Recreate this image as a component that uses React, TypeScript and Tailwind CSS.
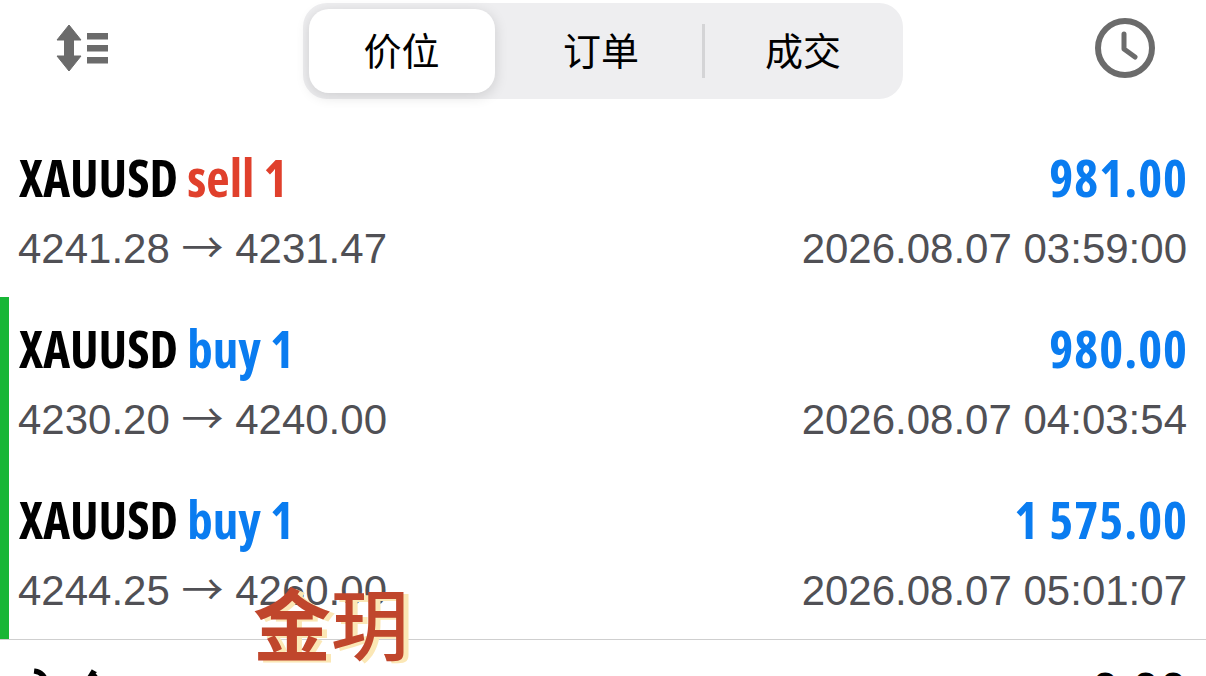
const sans = "font-['Liberation_Sans','Noto_Sans_CJK_SC',sans-serif]";
const title = "font-['Open_Sans','Roboto',sans-serif] font-bold [font-stretch:75%]";

type Deal = {
  side: string;
  sideClass: string;
  profit: string;
  from: string;
  to: string;
  time: string;
  marked: boolean;
};

const deals: Deal[] = [
  { side: "sell 1", sideClass: "text-[#e0402c]", profit: "981.00", from: "4241.28", to: "4231.47", time: "2026.08.07 03:59:00", marked: false },
  { side: "buy 1", sideClass: "text-[#0a7cf0]", profit: "980.00", from: "4230.20", to: "4240.00", time: "2026.08.07 04:03:54", marked: true },
  { side: "buy 1", sideClass: "text-[#0a7cf0]", profit: "1 575.00", from: "4244.25", to: "4260.00", time: "2026.08.07 05:01:07", marked: true },
];

function SortIcon() {
  return (
    <svg width="54" height="48" viewBox="0 0 54 48" fill="#6b6b6b">
      <path d="M13 1 L25 16 L17.5 16 L17.5 32 L25 32 L13 47 L1 32 L8.5 32 L8.5 16 L1 16 Z" stroke="#6b6b6b" strokeWidth="1" strokeLinejoin="round" />
      <rect x="31" y="9" width="21" height="6.5" />
      <rect x="31" y="21" width="21" height="6.5" />
      <rect x="31" y="33" width="21" height="6.5" />
    </svg>
  );
}

function ClockIcon() {
  return (
    <svg width="60" height="60" viewBox="0 0 60 60" fill="none" stroke="#6b6b6b" strokeLinecap="round" strokeLinejoin="round">
      <circle cx="30" cy="30" r="27" strokeWidth="6" />
      <path d="M29 16 V31 L40 39" strokeWidth="5" />
    </svg>
  );
}

function Row({ deal }: { deal: Deal }) {
  return (
    <div className={`relative h-[171px] pr-[19px] ${deal.marked ? "border-l-[9px] border-[#18b636] pl-[10px]" : "pl-[19px]"}`}>
      <div className="flex justify-between items-baseline pt-[21px] h-[90px]">
        <div className={`${title} text-[51px] leading-[60px] text-black whitespace-pre`}>
          XAUUSD <span className={deal.sideClass}>{deal.side}</span>
        </div>
        <div className={`${title} text-[51px] leading-[60px] tracking-[1px] -mr-[1px] text-[#0a7cf0] whitespace-pre`}>{deal.profit}</div>
      </div>
      <div className={`${sans} flex justify-between items-baseline text-[42px] leading-[48px] text-[#505055] mt-[5px]`}>
        <span className="-ml-[1px]">
          {deal.from} <span className="font-['Noto_Sans_CJK_SC',sans-serif]">→</span> {deal.to}
        </span>
        <span>{deal.time}</span>
      </div>
    </div>
  );
}

export default function App() {
  return (
    <div className={`relative w-[1206px] h-[676px] overflow-hidden bg-white ${sans}`}>
      <header className="flex items-start justify-between h-[126px] pt-[3px] pl-[56px] pr-[51px]">
        <div className="mt-[21px]"><SortIcon /></div>
        <div className="flex items-center w-[600px] h-[96px] p-[6px] rounded-[24px] bg-[#eeeef0]">
          <div className="flex items-center justify-center w-[186px] h-[84px] rounded-[20px] bg-white shadow-[0_3px_14px_rgba(0,0,0,0.14)] text-[38px] text-black pt-[2px]">价位</div>
          <div className="flex items-center justify-center w-[207px] h-[84px] pl-[6px] pt-[2px] text-[38px] text-black">订单</div>
          <div className="w-[3px] h-[54px] bg-[#d4d4d6]" />
          <div className="flex items-center justify-center flex-1 h-[84px] pl-[5px] pt-[2px] text-[38px] text-black">成交</div>
        </div>
        <div className="mt-[15px]"><ClockIcon /></div>
      </header>

      {deals.map((d) => (
        <Row key={d.time} deal={d} />
      ))}

      <div className="flex justify-between items-start border-t border-[#cfcfcf] pl-[19px] pr-[19px] pt-[22px]">
        <span className={`${title} text-[50px] leading-[60px] text-black`}>入金</span>
        <span className="font-['Open_Sans',sans-serif] font-semibold text-[48px] leading-[60px] text-black -mt-[2px]">0.00</span>
      </div>

      {/* Broker stamp drawn over the list */}
      <div className="absolute left-[253px] top-[576px] text-[78px] leading-[90px] text-[#c0462c] font-['Noto_Sans_CJK_SC',sans-serif] [text-shadow:5px_2px_0_#fbe7b5] whitespace-nowrap">
        <span className="font-bold">金</span>
        <span className="font-medium">玥</span>
      </div>
    </div>
  );
}
